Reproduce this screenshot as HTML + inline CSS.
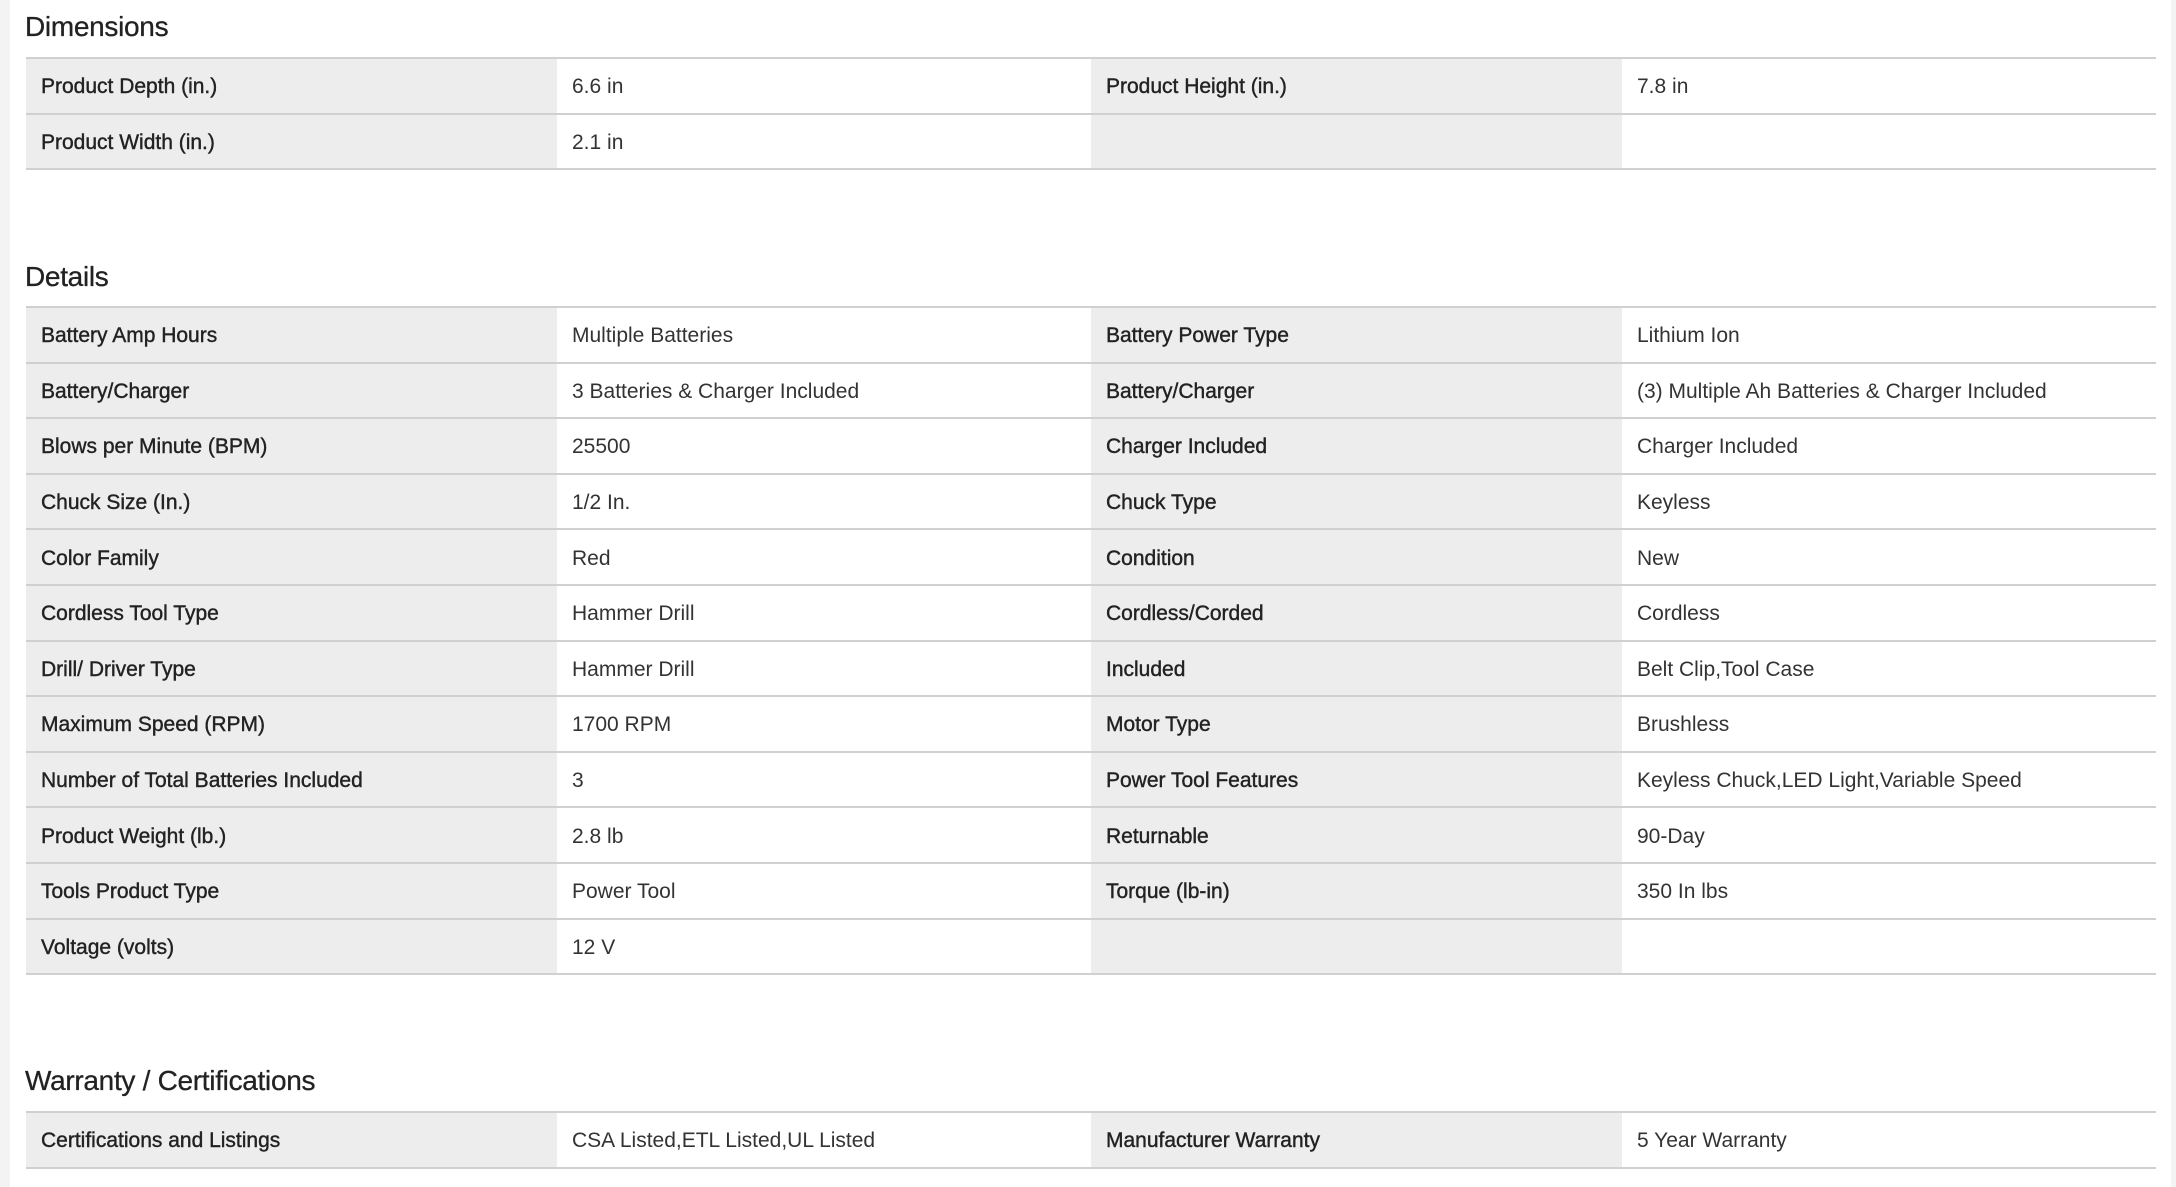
<!DOCTYPE html>
<html><head><meta charset="utf-8"><style>
html,body{margin:0;padding:0;}
body{width:2176px;height:1187px;background:#fff;position:relative;overflow:hidden;font-family:"Liberation Sans",Arial,sans-serif;}
.ls{position:absolute;left:0;top:0;width:10px;height:1187px;background:#f3f3f3;}
.rs{position:absolute;right:0;top:0;width:5px;height:1187px;background:#f3f3f3;}
h2{position:absolute;left:25px;margin:0;font-weight:normal;font-size:28px;color:#222;letter-spacing:-0.3px;-webkit-text-stroke:0.3px #222;}
table{position:absolute;left:26px;width:2130px;border-collapse:collapse;table-layout:fixed;}
td{height:55.6px;border-top:2px solid #d0d0d0;padding:3px 0 0 15px;font-size:21px;color:#333;vertical-align:middle;box-sizing:border-box;}
tr:last-child td{border-bottom:2px solid #d0d0d0;}
td.l{background:#ededed;color:#222;-webkit-text-stroke:0.4px #222;}
</style></head><body>
<div class="ls"></div><div class="rs"></div>
<h2 style="top:11px">Dimensions</h2>
<table style="top:57px"><colgroup><col style="width:531px"><col style="width:534px"><col style="width:531px"><col style="width:534px"></colgroup>
<tr><td class="l">Product Depth (in.)</td><td>6.6 in</td><td class="l">Product Height (in.)</td><td>7.8 in</td></tr>
<tr><td class="l">Product Width (in.)</td><td>2.1 in</td><td class="l"></td><td></td></tr>
</table>
<h2 style="top:261px">Details</h2>
<table style="top:306px"><colgroup><col style="width:531px"><col style="width:534px"><col style="width:531px"><col style="width:534px"></colgroup>
<tr><td class="l">Battery Amp Hours</td><td>Multiple Batteries</td><td class="l">Battery Power Type</td><td>Lithium Ion</td></tr>
<tr><td class="l">Battery/Charger</td><td>3 Batteries &amp; Charger Included</td><td class="l">Battery/Charger</td><td>(3) Multiple Ah Batteries &amp; Charger Included</td></tr>
<tr><td class="l">Blows per Minute (BPM)</td><td>25500</td><td class="l">Charger Included</td><td>Charger Included</td></tr>
<tr><td class="l">Chuck Size (In.)</td><td>1/2 In.</td><td class="l">Chuck Type</td><td>Keyless</td></tr>
<tr><td class="l">Color Family</td><td>Red</td><td class="l">Condition</td><td>New</td></tr>
<tr><td class="l">Cordless Tool Type</td><td>Hammer Drill</td><td class="l">Cordless/Corded</td><td>Cordless</td></tr>
<tr><td class="l">Drill/ Driver Type</td><td>Hammer Drill</td><td class="l">Included</td><td>Belt Clip,Tool Case</td></tr>
<tr><td class="l">Maximum Speed (RPM)</td><td>1700 RPM</td><td class="l">Motor Type</td><td>Brushless</td></tr>
<tr><td class="l">Number of Total Batteries Included</td><td>3</td><td class="l">Power Tool Features</td><td>Keyless Chuck,LED Light,Variable Speed</td></tr>
<tr><td class="l">Product Weight (lb.)</td><td>2.8 lb</td><td class="l">Returnable</td><td>90-Day</td></tr>
<tr><td class="l">Tools Product Type</td><td>Power Tool</td><td class="l">Torque (lb-in)</td><td>350 In lbs</td></tr>
<tr><td class="l">Voltage (volts)</td><td>12 V</td><td class="l"></td><td></td></tr>
</table>
<h2 style="top:1065px">Warranty / Certifications</h2>
<table style="top:1111px"><colgroup><col style="width:531px"><col style="width:534px"><col style="width:531px"><col style="width:534px"></colgroup>
<tr><td class="l">Certifications and Listings</td><td>CSA Listed,ETL Listed,UL Listed</td><td class="l">Manufacturer Warranty</td><td>5 Year Warranty</td></tr>
</table>
</body></html>
